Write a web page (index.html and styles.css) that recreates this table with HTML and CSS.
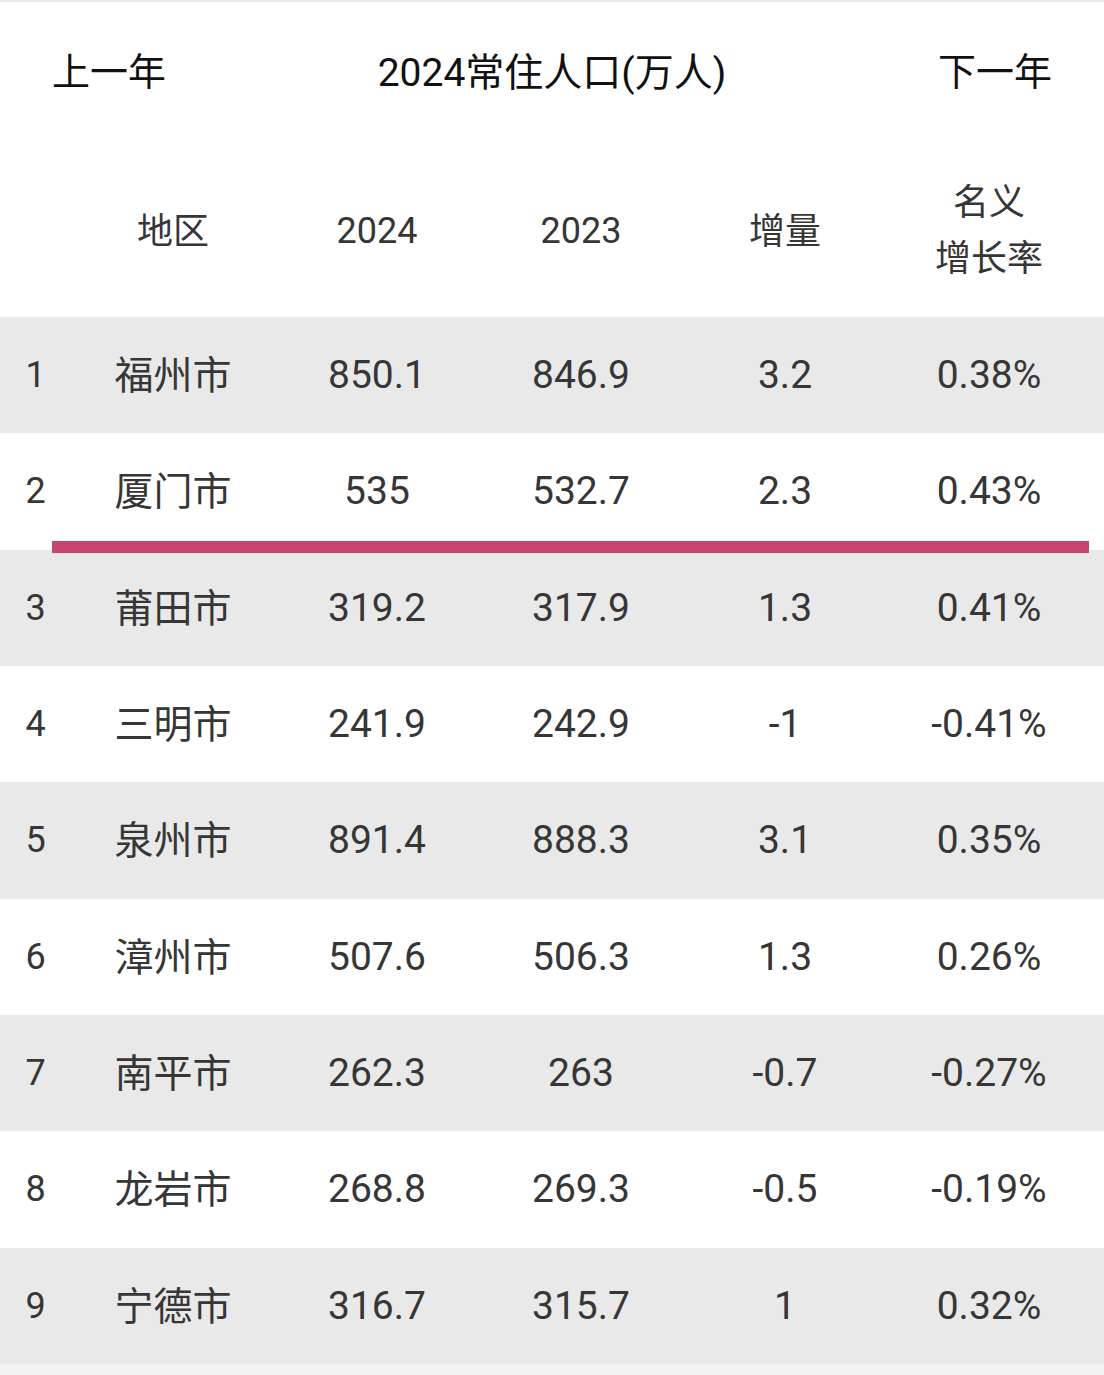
FILE: index.html
```html
<!DOCTYPE html>
<html lang="zh-CN">
<head>
<meta charset="utf-8">
<title>2024常住人口</title>
<link rel="stylesheet" href="styles.css">
</head>
<body>
<div class="page">
  <div class="topbar">
    <span class="nav">上一年</span>
    <span class="title">2024常住人口(万人)</span>
    <span class="nav">下一年</span>
  </div>
  <div class="row head">
    <div class="c idx"></div>
    <div class="c zh">地区</div>
    <div class="c">2024</div>
    <div class="c">2023</div>
    <div class="c zh">增量</div>
    <div class="c two">名义<br>增长率</div>
  </div>
  <div class="row odd"><div class="c idx">1</div><div class="c zh">福州市</div><div class="c">850.1</div><div class="c">846.9</div><div class="c">3.2</div><div class="c">0.38%</div></div>
  <div class="row marked"><div class="c idx">2</div><div class="c zh">厦门市</div><div class="c">535</div><div class="c">532.7</div><div class="c">2.3</div><div class="c">0.43%</div><span class="mark"></span></div>
  <div class="row odd"><div class="c idx">3</div><div class="c zh">莆田市</div><div class="c">319.2</div><div class="c">317.9</div><div class="c">1.3</div><div class="c">0.41%</div></div>
  <div class="row"><div class="c idx">4</div><div class="c zh">三明市</div><div class="c">241.9</div><div class="c">242.9</div><div class="c">-1</div><div class="c">-0.41%</div></div>
  <div class="row odd"><div class="c idx">5</div><div class="c zh">泉州市</div><div class="c">891.4</div><div class="c">888.3</div><div class="c">3.1</div><div class="c">0.35%</div></div>
  <div class="row"><div class="c idx">6</div><div class="c zh">漳州市</div><div class="c">507.6</div><div class="c">506.3</div><div class="c">1.3</div><div class="c">0.26%</div></div>
  <div class="row odd"><div class="c idx">7</div><div class="c zh">南平市</div><div class="c">262.3</div><div class="c">263</div><div class="c">-0.7</div><div class="c">-0.27%</div></div>
  <div class="row"><div class="c idx">8</div><div class="c zh">龙岩市</div><div class="c">268.8</div><div class="c">269.3</div><div class="c">-0.5</div><div class="c">-0.19%</div></div>
  <div class="row odd"><div class="c idx">9</div><div class="c zh">宁德市</div><div class="c">316.7</div><div class="c">315.7</div><div class="c">1</div><div class="c">0.32%</div></div>
</div>
</body>
</html>
```

FILE: styles.css
```css
html, body {
  margin: 0;
  padding: 0;
  background: #f3f3f3;
}
body {
  font-family: Roboto, "Noto Sans CJK SC", sans-serif;
  color: #363636;
}
.page {
  width: 1104px;
  background: #fff;
  border-top: 2px solid #e8e8e8;
}
.topbar {
  height: 133px;
  padding: 0 52px 10px;
  display: flex;
  align-items: center;
  justify-content: space-between;
  font-size: 38px;
  color: #111;
}
.title {
  font-size: 39px;
}
.row {
  display: grid;
  grid-template-columns: 71px repeat(5, 204px);
  align-items: center;
  height: 116.33px;
  font-size: 39px;
  position: relative;
}
.row.head {
  height: 172px;
  font-size: 36px;
}
.c {
  text-align: center;
}
.zh {
  padding-bottom: 6px;
}
.two {
  line-height: 56px;
}
.idx {
  font-size: 36px;
}
.odd {
  background: #e9e9e9;
}
.mark {
  position: absolute;
  left: 52px;
  right: 15px;
  bottom: -3px;
  height: 12px;
  background: #c94473;
  z-index: 2;
}
```
